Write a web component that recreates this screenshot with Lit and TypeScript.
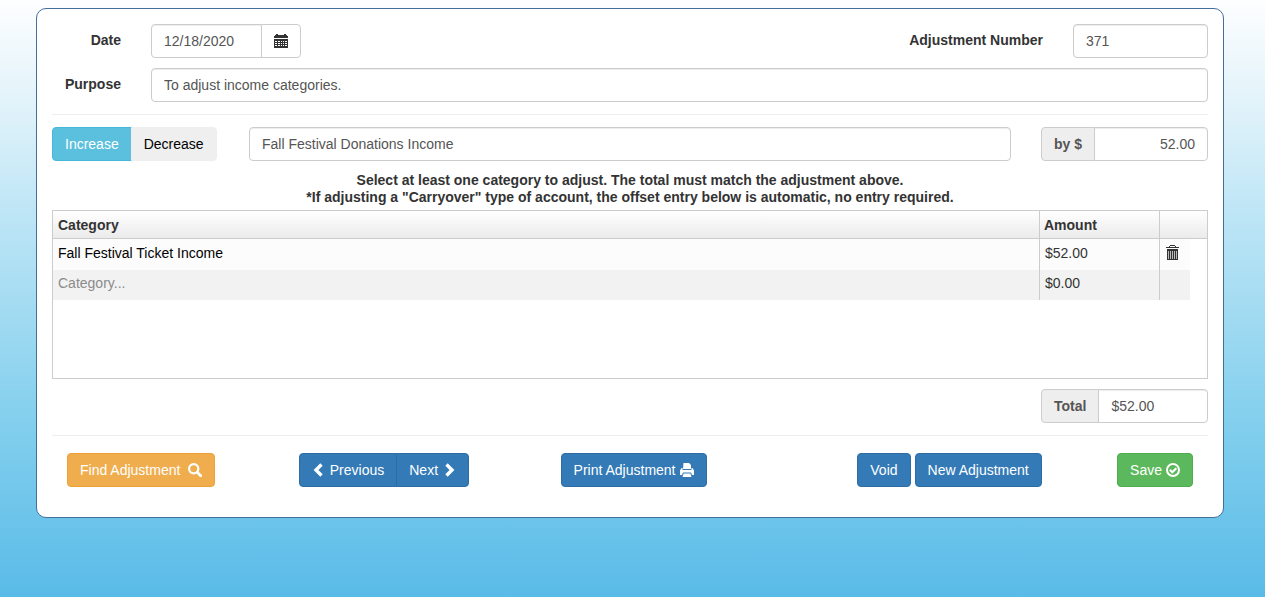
import { LitElement, html, css, svg } from "lit";
import { customElement, state } from "lit/decorators.js";

interface Entry {
  category: string;
  amount: string;
}

const calendarIcon = svg`<svg class="icon" viewBox="0 0 14 14" shape-rendering="crispEdges" aria-hidden="true">
  <path d="M2 0h2v1h6V0h2v1h1v1h1v2H0V2h1V1h1z"/>
  <path fill-rule="evenodd" d="M0 5h14v9H0zM1 7v1h2V7zM4 7v1h2V7zM7 7v1h1V7zM9 7v1h1V7zM11 7v1h2V7zM1 9v1h2V9zM4 9v1h2V9zM7 9v1h1V9zM9 9v1h1V9zM11 9v1h2V9zM1 11v1h2v-1zM4 11v1h2v-1zM7 11v1h1v-1zM9 11v1h1v-1zM11 11v1h2v-1z"/>
</svg>`;

const searchIcon = svg`<svg class="icon" viewBox="0 0 14 14" aria-hidden="true">
  <circle cx="5.700" cy="5.700" r="4.600" fill="none" stroke="currentColor" stroke-width="2.200"/>
  <path d="M9.200 9.200l3.500 3.500" stroke="currentColor" stroke-width="2.800" stroke-linecap="round"/>
</svg>`;

const leftIcon = svg`<svg class="icon" viewBox="0 0 14 14" aria-hidden="true">
  <path d="M9.500 1.500L4 7l5.500 5.500" fill="none" stroke="currentColor" stroke-width="3.400"/>
</svg>`;

const rightIcon = svg`<svg class="icon" viewBox="0 0 14 14" aria-hidden="true">
  <path d="M4.500 1.500L10 7l-5.500 5.500" fill="none" stroke="currentColor" stroke-width="3.400"/>
</svg>`;

const printIcon = svg`<svg class="icon" viewBox="0 0 14 14" aria-hidden="true">
  <path d="M3.500 0h5.500l2 2v4H3z"/>
  <path d="M1.500 5h1v2h9V5h1L14 7.500V12h-2l-1-2.500H3L2 12H0V7.500z"/>
  <path d="M3.600 10.500h6.800L11.500 14h-9z"/>
</svg>`;

const okIcon = svg`<svg class="icon" viewBox="0 0 14 14" aria-hidden="true">
  <circle cx="7" cy="7" r="6" fill="none" stroke="currentColor" stroke-width="2"/>
  <path d="M3.800 6.800L6.300 9.200l4-4" fill="none" stroke="currentColor" stroke-width="2.200"/>
</svg>`;

const trashIcon = svg`<svg class="trash-icon" viewBox="0 0 13 15" shape-rendering="crispEdges" aria-hidden="true">
  <path d="M4 0h5v1h1v1h3v1H0V2h3V1h1zM4 1v1h5V1z" fill-rule="evenodd"/>
  <path d="M1 4h11v11H1z"/>
  <path d="M2 6h1v8H2zM4 6h1v8H4zM6 6h1v8H6zM8 6h1v8H8zM10 6h1v8h-1z" fill="#bbb"/>
</svg>`;

@customElement("app-root")
export class AppRoot extends LitElement {
  @state() private direction = "increase";

  private entries: Entry[] = [
    { category: "Fall Festival Ticket Income", amount: "$52.00" },
    { category: "", amount: "$0.00" },
  ];

  static styles = css`
    * {
      box-sizing: border-box;
    }
    :host {
      display: block;
      min-height: 100vh;
      padding: 8px 41px 40px 36px;
      background: linear-gradient(#fdfeff 0%, #e2f3fa 17%, #bfe6f6 35%, #82cfed 71%, #5abbe8 100%);
      box-sizing: border-box;
      font: 14px/20px "Liberation Sans", Arial, sans-serif;
      color: #333;
    }
    button,
    input {
      font: inherit;
      color: inherit;
      margin: 0;
    }
    .card {
      padding: 15px 15px 30px;
      border: 1px solid #446e9b;
      border-radius: 10px;
      background: #fff;
    }
    .row {
      display: flex;
      align-items: center;
      gap: 30px;
      margin-bottom: 10px;
    }
    .label {
      padding-bottom: 2px;
      font-weight: 700;
    }
    .lead {
      width: 69px;
      text-align: right;
    }
    .push {
      margin-left: auto;
    }
    .control {
      height: 34px;
      min-width: 0;
      padding: 6px 12px;
      border: 1px solid #ccc;
      border-radius: 4px;
      background: #fff;
      color: #555;
      box-shadow: inset 0 1px 1px rgba(0, 0, 0, 0.075);
    }
    .grow {
      flex: 1;
    }
    .number {
      width: 135px;
    }
    .group {
      display: flex;
    }
    .group > :not(:first-child) {
      border-top-left-radius: 0;
      border-bottom-left-radius: 0;
      margin-left: -1px;
    }
    .group > :not(:last-child) {
      border-top-right-radius: 0;
      border-bottom-right-radius: 0;
    }
    .date {
      width: 111px;
    }
    .addon {
      display: flex;
      align-items: center;
      height: 34px;
      padding: 0 12px;
      border: 1px solid #ccc;
      border-radius: 4px;
      background: #eee;
      color: #555;
      font-weight: 700;
      white-space: nowrap;
    }
    .side {
      width: 167px;
    }
    .right {
      text-align: right;
    }
    hr {
      height: 1px;
      margin: 12px 0;
      border: 0;
      background: #eee;
    }
    .btn {
      display: inline-flex;
      align-items: center;
      justify-content: center;
      gap: 4px;
      height: 34px;
      padding: 0 12px;
      border: 1px solid #ccc;
      border-radius: 4px;
      background: #fff;
      white-space: nowrap;
      cursor: pointer;
    }
    .btn.wide {
      gap: 8px;
    }
    .toggle {
      border-color: #efefef;
      background: #efefef;
      color: #000;
    }
    .toggle[aria-pressed="true"] {
      border-color: #46b8da;
      background: #5bc0de;
      color: #fff;
    }
    .primary {
      border-color: #2e6da4;
      background: #337ab7;
      color: #fff;
    }
    .warning {
      border-color: #eea236;
      background: #f0ad4e;
      color: #fff;
    }
    .success {
      border-color: #4cae4c;
      background: #5cb85c;
      color: #fff;
    }
    .icon {
      width: 14px;
      height: 14px;
      fill: currentColor;
    }
    .hint {
      margin: 11px 0 4px;
      font-weight: 700;
      line-height: 17px;
      text-align: center;
    }
    .list {
      height: 169px;
      margin-bottom: 10px;
      border: 1px solid #ccc;
      overflow: hidden;
    }
    table {
      width: 100%;
      border-collapse: separate;
      border-spacing: 0;
      table-layout: fixed;
    }
    .amount-col {
      width: 120px;
    }
    .action-col {
      width: 31px;
    }
    .rest-col {
      width: 17px;
    }
    th {
      height: 28px;
      padding: 0 4px 0 5px;
      border-bottom: 1px solid #ccc;
      background: linear-gradient(#fff, #ebebeb);
      text-align: left;
      font-weight: 700;
    }
    td {
      height: 30px;
      padding: 0 5px 4px;
    }
    .cell {
      border-left: 1px solid #ccc;
    }
    th.cell {
      padding-left: 4px;
    }
    td.action {
      padding-left: 6px;
    }
    .first .fill {
      height: 31px;
      background: #fcfcfc;
    }
    .second .fill {
      background: #f2f2f2;
    }
    .category {
      display: block;
      width: 100%;
      height: 20px;
      padding: 0;
      border: 0;
      background: transparent;
      color: #000;
      outline: 0;
    }
    .category::placeholder {
      color: #8b8b8b;
      opacity: 1;
    }
    .trash {
      display: block;
      padding: 0;
      border: 0;
      background: none;
      cursor: pointer;
    }
    .trash-icon {
      display: block;
      width: 13px;
      height: 15px;
      fill: #333;
    }
    .actions {
      display: grid;
      grid-template-columns: 232fr 262fr 297fr 260fr auto;
      justify-items: start;
      padding: 5px 15px 0;
    }
    .pair {
      display: flex;
      gap: 4px;
    }
  `;

  private pick(direction: string) {
    this.direction = direction;
  }

  private renderEntry(entry: Entry, index: number) {
    return html`<tr class=${index === 0 ? "first" : "second"}>
      <td class="fill">
        <input class="category" aria-label="Category" placeholder="Category..." .value=${entry.category} />
      </td>
      <td class="fill cell">${entry.amount}</td>
      <td class="fill cell action">
        ${entry.category ? html`<button class="trash" aria-label="Delete">${trashIcon}</button>` : ""}
      </td>
      <td></td>
    </tr>`;
  }

  render() {
    return html`<main class="card">
      <div class="row">
        <label class="label lead" for="date">Date</label>
        <div class="group">
          <input class="control date" id="date" value="12/18/2020" />
          <button class="btn" aria-label="Choose date">${calendarIcon}</button>
        </div>
        <label class="label push" for="number">Adjustment Number</label>
        <input class="control number" id="number" value="371" />
      </div>
      <div class="row">
        <label class="label lead" for="purpose">Purpose</label>
        <input class="control grow" id="purpose" value="To adjust income categories." />
      </div>
      <hr />
      <div class="row">
        <div class="group side">
          <button class="btn toggle" aria-pressed=${this.direction === "increase"} @click=${() => this.pick("increase")}>Increase</button>
          <button class="btn toggle" aria-pressed=${this.direction === "decrease"} @click=${() => this.pick("decrease")}>Decrease</button>
        </div>
        <input class="control grow" aria-label="Account" value="Fall Festival Donations Income" />
        <div class="group side">
          <label class="addon" for="by">by $</label>
          <input class="control grow right" id="by" value="52.00" />
        </div>
      </div>
      <p class="hint">
        Select at least one category to adjust. The total must match the adjustment above.<br />
        *If adjusting a "Carryover" type of account, the offset entry below is automatic, no entry required.
      </p>
      <div class="list">
        <table>
          <colgroup>
            <col />
            <col class="amount-col" />
            <col class="action-col" />
            <col class="rest-col" />
          </colgroup>
          <thead>
            <tr>
              <th>Category</th>
              <th class="cell">Amount</th>
              <th class="cell" colspan="2"></th>
            </tr>
          </thead>
          <tbody>
            ${this.entries.map((entry, index) => this.renderEntry(entry, index))}
          </tbody>
        </table>
      </div>
      <div class="group side push">
        <label class="addon" for="total">Total</label>
        <input class="control grow" id="total" value="$52.00" />
      </div>
      <hr />
      <div class="actions">
        <button class="btn wide warning">Find Adjustment ${searchIcon}</button>
        <div class="group">
          <button class="btn primary">${leftIcon} Previous</button>
          <button class="btn primary">Next ${rightIcon}</button>
        </div>
        <button class="btn primary">Print Adjustment ${printIcon}</button>
        <div class="pair">
          <button class="btn primary">Void</button>
          <button class="btn primary">New Adjustment</button>
        </div>
        <button class="btn success">Save ${okIcon}</button>
      </div>
    </main>`;
  }
}
